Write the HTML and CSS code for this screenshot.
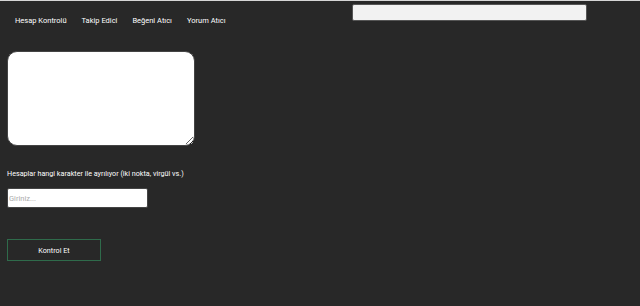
FILE: index.html
```html
<!DOCTYPE html>
<html lang="tr">
<head>
    <meta charset="UTF-8">
    <meta name="viewport" content="width=device-width, initial-scale=1.0">
    <title>Hesap Kontrolü</title>
    <link rel="stylesheet" href="styles.css">
</head>
<body>
    <div class="topbar">
        <nav class="menu">
            <a href="#">Hesap Kontrolü</a>
            <a href="#">Takip Edici</a>
            <a href="#">Beğeni Atıcı</a>
            <a href="#">Yorum Atıcı</a>
        </nav>
        <input type="text" class="search">
    </div>
    <div class="content">
        <textarea class="accounts"></textarea>
        <p class="label">Hesaplar hangi karakter ile ayrılıyor (iki nokta, virgül vs.)</p>
        <input type="text" class="separator" placeholder="Giriniz...">
        <button class="check">Kontrol Et</button>
    </div>
</body>
</html>
```

FILE: styles.css
```css
body {
    margin: 0;
    padding: 0;
    background-color: #282828;
    border-top: 1px solid #d6d6d6;
    font-family: Roboto, "Liberation Sans", sans-serif;
    color: #fff;
    height: 305px;
    overflow: hidden;
}

.topbar {
    display: flex;
    align-items: flex-start;
    padding: 3px 0 0 15px;
}

.menu {
    display: flex;
    gap: 15px;
    width: 337px;
    padding-top: 12px;
}

.menu a {
    color: #fff;
    text-decoration: none;
    font-size: 7.5px;
}

.search {
    width: 235px;
    height: 17px;
    box-sizing: border-box;
    background-color: #f2f2f2;
    border: 1px solid #555;
    border-radius: 2px;
    padding: 0 4px;
}

.content {
    padding: 26px 0 0 7px;
}

.accounts {
    display: block;
    width: 188px;
    height: 95px;
    box-sizing: border-box;
    background-color: #fff;
    border: 1px solid #444;
    border-radius: 10px;
    margin: 0;
}

.label {
    font-size: 7.2px;
    margin: 23px 0 10px;
    color: #fff;
}

.separator {
    display: block;
    width: 141px;
    height: 20px;
    box-sizing: border-box;
    border: 1px solid #444;
    border-radius: 2px;
    background-color: #fff;
    padding: 0 1px;
    font-family: Roboto, "Liberation Sans", sans-serif;
    font-size: 7.5px;
}

.separator::placeholder {
    color: #aaa;
}

.check {
    display: block;
    margin-top: 31px;
    width: 94px;
    height: 22px;
    background-color: transparent;
    border: 1px solid #2f6b4b;
    color: #fff;
    font-family: Roboto, "Liberation Sans", sans-serif;
    font-size: 7.2px;
    cursor: pointer;
}
```
